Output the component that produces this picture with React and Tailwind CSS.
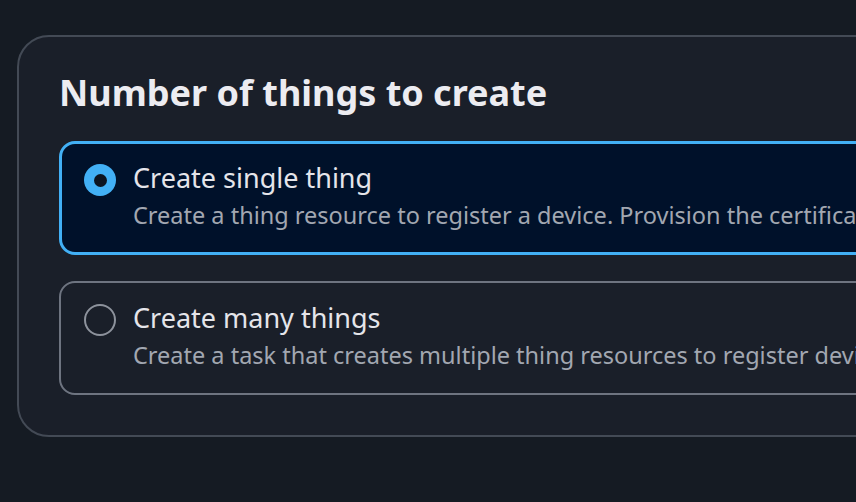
export default function App() {
  return (
    <div
      className="w-[856px] h-[502px] overflow-hidden bg-[#151b23] pt-[35px] pl-[17px]"
      style={{ fontFamily: '"Noto Sans", "Open Sans", sans-serif' }}
    >
      <div className="w-[900px] rounded-[32px] border-2 border-[#434a55] bg-[#1a1f29] pl-[40px] pr-[40px] pt-[32px] pb-[40px]">
        <h2 className="text-[36px] leading-[48px] font-bold text-[#ececf1] mb-[24px]">
          Number of things to create
        </h2>
        <div className="flex flex-col gap-[26px]">
          <div className="h-[114px] rounded-[16px] border-[3px] border-[#42b0f5] bg-[#00112a] flex pl-[22px] pt-[16px]">
            <div className="w-[32px] h-[32px] rounded-full bg-[#42b0f5] flex items-center justify-center mt-[4px] shrink-0">
              <div className="w-[13px] h-[13px] rounded-full bg-[#0c1420]" />
            </div>
            <div className="ml-[17px] whitespace-nowrap">
              <div className="text-[27px] leading-[36px] text-[#e5e5ea]">Create single thing</div>
              <div className="text-[23.5px] leading-[32px] mt-[3px] text-[#a2a7b1]">
                Create a thing resource to register a device. Provision the certificate and policy necessary to allow the device to connect to AWS IoT.
              </div>
            </div>
          </div>
          <div className="h-[114px] rounded-[16px] border-2 border-[#6e7480] bg-[#1a1f29] flex pl-[23px] pt-[17px]">
            <div className="w-[32px] h-[32px] rounded-full border-2 border-[#8d929c] mt-[4px] shrink-0" />
            <div className="ml-[17px] whitespace-nowrap">
              <div className="text-[27px] leading-[36px] text-[#e5e5ea]">Create many things</div>
              <div className="text-[23.5px] leading-[32px] mt-[3px] text-[#a2a7b1]">
                Create a task that creates multiple thing resources to register devices and provision the resources those devices require to connect to AWS IoT.
              </div>
            </div>
          </div>
        </div>
      </div>
    </div>
  );
}
